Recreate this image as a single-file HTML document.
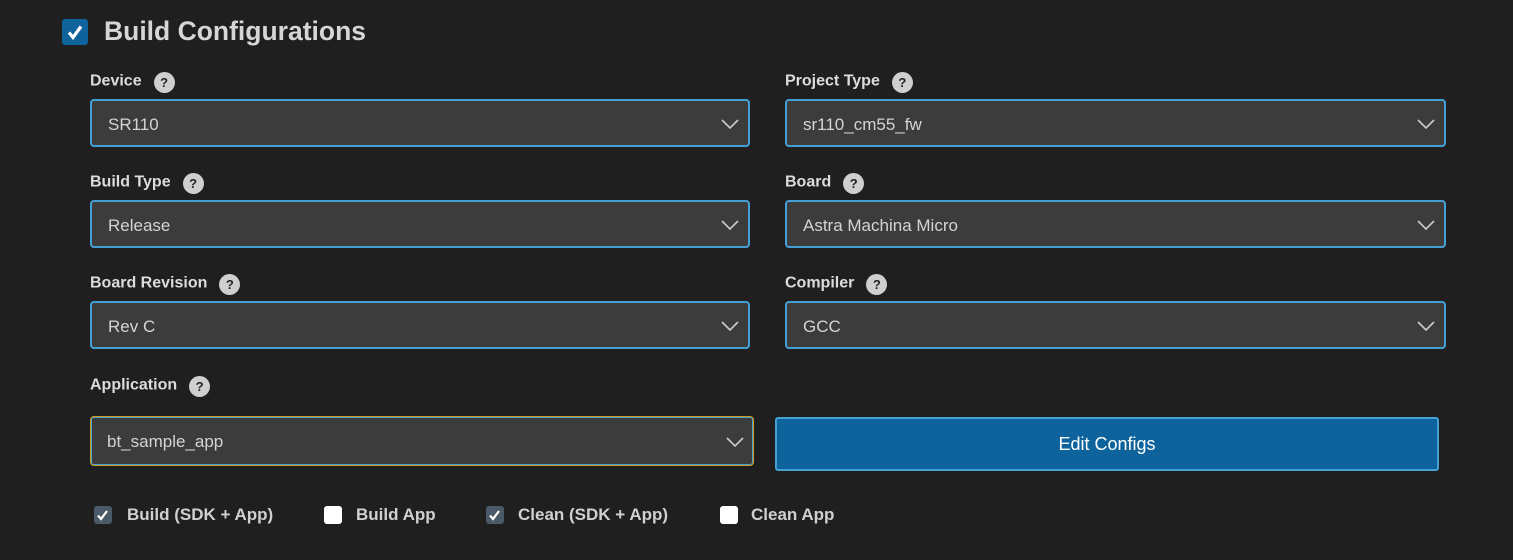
<!DOCTYPE html>
<html><head><style>
body{margin:0;width:1513px;height:560px;background:#1f1f1f;font-family:"Liberation Sans",sans-serif;position:relative;overflow:hidden;color:#ddd}
.a{position:absolute}
.lbl{font-weight:bold;font-size:16px;color:#dcdcdc;height:20px;line-height:20px}
.q{display:inline-block;width:21px;height:21px;border-radius:50%;background:#cfcfcf;color:#222;font-size:13px;font-weight:bold;text-align:center;line-height:21px;margin-left:12px;vertical-align:middle;position:relative;top:1px}
.sel{box-sizing:border-box;height:48px;border:2px solid #44a1d6;border-radius:4px;background:#3c3c3c;font-size:17px;color:#d4d4d4;line-height:48px;padding-left:16px}
.sel svg{position:absolute;right:8px;top:15px}
.cb{box-sizing:border-box;width:18px;height:18px;border-radius:3px;position:absolute;top:506px}
.cl{position:absolute;top:505px;font-size:17px;font-weight:bold;color:#d0d0d0;line-height:20px}
</style></head><body>
<div class="a" style="left:62px;top:19px;width:26px;height:26px;background:#0e639c;border-radius:3px"><svg width="26" height="26"><path d="M7 13.5l4 5 8-11" stroke="#fff" stroke-width="3.2" fill="none"/></svg></div>
<div class="a" style="left:104px;top:15px;font-size:26.5px;font-weight:bold;color:#d6d6d6;line-height:32px">Build Configurations</div>

<div class="a lbl" style="left:90px;top:71px">Device<span class="q">?</span></div>
<div class="a lbl" style="left:785px;top:71px">Project Type<span class="q">?</span></div>
<div class="a sel" style="left:90px;top:99px;width:660px">SR110<svg width="20" height="16"><path d="M2 4l8 8 8-8" stroke="#ccc" stroke-width="1.6" fill="none"/></svg></div>
<div class="a sel" style="left:785px;top:99px;width:661px">sr110_cm55_fw<svg width="20" height="16"><path d="M2 4l8 8 8-8" stroke="#ccc" stroke-width="1.6" fill="none"/></svg></div>

<div class="a lbl" style="left:90px;top:172px">Build Type<span class="q">?</span></div>
<div class="a lbl" style="left:785px;top:172px">Board<span class="q">?</span></div>
<div class="a sel" style="left:90px;top:200px;width:660px">Release<svg width="20" height="16"><path d="M2 4l8 8 8-8" stroke="#ccc" stroke-width="1.6" fill="none"/></svg></div>
<div class="a sel" style="left:785px;top:200px;width:661px">Astra Machina Micro<svg width="20" height="16"><path d="M2 4l8 8 8-8" stroke="#ccc" stroke-width="1.6" fill="none"/></svg></div>

<div class="a lbl" style="left:90px;top:273px">Board Revision<span class="q">?</span></div>
<div class="a lbl" style="left:785px;top:273px">Compiler<span class="q">?</span></div>
<div class="a sel" style="left:90px;top:301px;width:660px">Rev C<svg width="20" height="16"><path d="M2 4l8 8 8-8" stroke="#ccc" stroke-width="1.6" fill="none"/></svg></div>
<div class="a sel" style="left:785px;top:301px;width:661px">GCC<svg width="20" height="16"><path d="M2 4l8 8 8-8" stroke="#ccc" stroke-width="1.6" fill="none"/></svg></div>

<div class="a lbl" style="left:90px;top:375px">Application<span class="q">?</span></div>
<div class="a sel" style="left:90px;top:416px;width:664px;height:50px;line-height:50px;border:1px solid #d49a1a;box-shadow:inset 0 0 0 1px #44a1d6">bt_sample_app<svg width="20" height="16" style="top:17px"><path d="M2 4l8 8 8-8" stroke="#ccc" stroke-width="1.6" fill="none"/></svg></div>
<div class="a" style="left:775px;top:417px;width:664px;height:54px;box-sizing:border-box;background:#0e639c;border:2px solid #44a1d6;border-radius:3px;color:#fff;font-size:18px;text-align:center;line-height:50px">Edit Configs</div>

<div class="cb" style="left:94px;background:#4a5a68"><svg width="18" height="18"><path d="M4 9.5l3 3.5 6-8" stroke="#fff" stroke-width="2.2" fill="none"/></svg></div>
<div class="cl" style="left:127px">Build (SDK + App)</div>
<div class="cb" style="left:324px;background:#fff"></div>
<div class="cl" style="left:356px">Build App</div>
<div class="cb" style="left:486px;background:#4a5a68"><svg width="18" height="18"><path d="M4 9.5l3 3.5 6-8" stroke="#fff" stroke-width="2.2" fill="none"/></svg></div>
<div class="cl" style="left:518px">Clean (SDK + App)</div>
<div class="cb" style="left:720px;background:#fff"></div>
<div class="cl" style="left:751px">Clean App</div>
</body></html>
